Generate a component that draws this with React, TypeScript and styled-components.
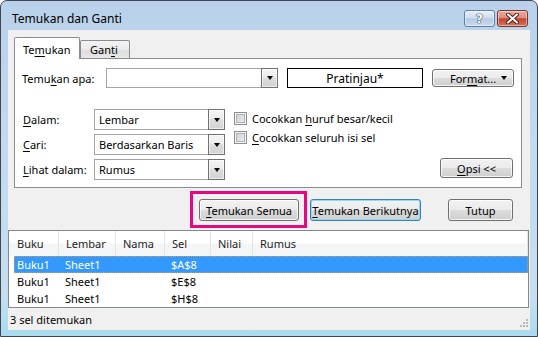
import React from "react";
import styled, { createGlobalStyle } from "styled-components";

const GlobalStyle = createGlobalStyle`
  html, body { margin: 0; padding: 0; background: #ffffff; }
  body {
    font-family: "Noto Sans", "Liberation Sans", Arial, sans-serif;
    font-size: 11px;
    color: #000000;
  }
  *, *::before, *::after { box-sizing: border-box; }
`;

const Window = styled.div`
  width: 538px;
  height: 337px;
  display: flex;
  flex-direction: column;
  border: 1px solid #3f4650;
  border-radius: 7px 7px 0 0;
  background: linear-gradient(180deg, #b9d1ea 0%, #c3d9ef 40%, #c6def0 88%, #a8dcee 100%);
  overflow: hidden;
`;

const TitleBar = styled.div`
  height: 29px;
  flex: none;
  display: flex;
  align-items: flex-start;
  padding: 9px 9px 0 11px;
`;

const Title = styled.div`
  flex: 1;
  font-size: 12px;
  line-height: 17px;
  color: #000000;
`;

const CaptionButtons = styled.div`
  display: flex;
  gap: 2px;
`;

const CaptionButton = styled.div<{ $close?: boolean }>`
  width: 31px;
  height: 17px;
  border: 1px solid ${(p) => (p.$close ? "#7e3326" : "#61809f")};
  border-radius: 3px;
  background: ${(p) =>
    p.$close
      ? "linear-gradient(180deg, #eaab9d 0%, #dc8f7e 45%, #c6442f 52%, #d2745c 100%)"
      : "linear-gradient(180deg, #e5eef8 0%, #d0deef 45%, #b5cae4 52%, #c8dbef 100%)"};
  box-shadow: inset 0 0 0 1px rgba(255, 255, 255, 0.45);
  display: flex;
  align-items: center;
  justify-content: center;
`;

const HelpGlyph = styled.span`
  font-family: "DejaVu Sans", sans-serif;
  font-weight: bold;
  font-size: 12px;
  line-height: 12px;
  color: #ffffff;
  text-shadow: 0 0 1px #2a3c52, 0 0 1px #2a3c52, 0 0 1px #2a3c52;
`;

const Client = styled.div`
  flex: 1;
  margin: 0 7px 6px 7px;
  background: #f0f0f0;
  display: flex;
  flex-direction: column;
`;

const TabArea = styled.div`
  padding: 7px 8px 0 6px;
`;

const TabStrip = styled.div`
  display: flex;
  align-items: flex-end;
  height: 21px;
  position: relative;
  z-index: 1;
`;

const Tab = styled.div<{ $active?: boolean; $w: number }>`
  width: ${(p) => p.$w}px;
  height: ${(p) => (p.$active ? 22 : 18)}px;
  margin-bottom: ${(p) => (p.$active ? -1 : 0)}px;
  border: 1px solid #898c95;
  border-bottom: none;
  border-radius: 2px 2px 0 0;
  background: ${(p) =>
    p.$active ? "#ffffff" : "linear-gradient(180deg, #f3f3f3 0%, #ebebeb 50%, #dedede 51%, #e6e6e6 100%)"};
  padding: ${(p) => (p.$active ? "2px 0 0 8px" : "0 0 0 9px")};
  display: flex;
  align-items: center;
  line-height: 14px;
`;

const Panel = styled.div`
  height: 130px;
  border: 1px solid #898c95;
  background: #ffffff;
  padding: 9px 8px 0 7px;
  display: flex;
  flex-direction: column;
`;

const FindRow = styled.div`
  display: flex;
  align-items: center;
  height: 20px;
`;

const FieldLabel = styled.span<{ $w: number }>`
  width: ${(p) => p.$w}px;
  flex: none;
  white-space: nowrap;
`;

const Key = styled.u`
  text-decoration: underline;
  text-underline-offset: 2px;
`;

const Combo = styled.div<{ $w: number; $h: number }>`
  width: ${(p) => p.$w}px;
  height: ${(p) => p.$h}px;
  flex: none;
  border: 1px solid #a5a5a5;
  background: #ffffff;
  display: flex;
  align-items: stretch;
`;

const ComboText = styled.div`
  flex: 1;
  padding-left: 4px;
  display: flex;
  align-items: center;
  white-space: nowrap;
`;

const DropButton = styled.div`
  width: 17px;
  margin: -1px -1px -1px 0;
  border: 1px solid #707070;
  background: linear-gradient(180deg, #f4f4f4 0%, #ebebeb 45%, #dddddd 50%, #d2d2d2 100%);
  box-shadow: inset 0 0 0 1px rgba(255, 255, 255, 0.6);
  display: flex;
  align-items: center;
  justify-content: center;
`;

const Arrow = styled.span`
  width: 0;
  height: 0;
  border-left: 3.5px solid transparent;
  border-right: 3.5px solid transparent;
  border-top: 4px solid #000000;
`;

const Preview = styled.div`
  width: 136px;
  height: 20px;
  margin-left: 9px;
  flex: none;
  border: 1px solid #000000;
  background: #ffffff;
  display: flex;
  align-items: center;
  justify-content: center;
  font-size: 12px;
`;

const PushButton = styled.div<{ $w: number; $h: number; $default?: boolean }>`
  width: ${(p) => p.$w}px;
  height: ${(p) => p.$h}px;
  flex: none;
  border: 1px solid ${(p) => (p.$default ? "#3c7fb1" : "#707070")};
  border-radius: 3px;
  background: linear-gradient(180deg, #f2f2f2 0%, #ebebeb 48%, #dddddd 50%, #cfcfcf 100%);
  box-shadow: inset 0 0 0 1px ${(p) => (p.$default ? "#8edbf9" : "rgba(255, 255, 255, 0.75)")};
  display: flex;
  align-items: center;
  justify-content: center;
  white-space: nowrap;
`;

const FormatButton = styled(PushButton)`
  margin-left: 9px;
  justify-content: space-between;
  padding: 0 6px 0 17px;
`;

const LowerSection = styled.div`
  display: flex;
  margin-top: 21px;
`;

const OptionGrid = styled.div`
  display: grid;
  grid-template-columns: 71px 131px;
  row-gap: 4px;
  align-items: center;
  padding-left: 1px;
`;

const CheckColumn = styled.div`
  display: flex;
  flex-direction: column;
  gap: 6px;
  margin-left: 9px;
  padding-top: 3px;
`;

const CheckRow = styled.div`
  display: flex;
  align-items: center;
  gap: 5px;
  height: 13px;
`;

const CheckBox = styled.span`
  width: 13px;
  height: 13px;
  flex: none;
  border: 1px solid #8e8f8f;
  background: linear-gradient(135deg, #cbcfd5 0%, #f0f0f0 100%);
  box-shadow: inset 0 0 0 1px #f4f4f4, inset 0 0 0 2px #aeb3b9;
`;

const OptionsButton = styled(PushButton)`
  margin-left: auto;
  align-self: flex-end;
  margin-bottom: 2px;
`;

const ButtonRow = styled.div`
  display: flex;
  align-items: center;
  height: 22px;
  margin-top: 11px;
  padding: 0 17px 0 191px;
  gap: 11px;
`;

const Highlight = styled.div`
  margin: -8px -8px -7px -9px;
  border: 3px solid #e5097f;
  padding: 5px 5px 4px 6px;
  display: flex;
`;

const CloseButton = styled(PushButton)`
  margin-left: auto;
`;

const ResultList = styled.div`
  height: 78px;
  margin: 9px 1px 0 0;
  border: 1px solid #828790;
  background: #ffffff;
  display: flex;
  flex-direction: column;
`;

const HeaderRow = styled.div`
  display: flex;
  height: 25px;
  background: linear-gradient(180deg, #ffffff 0%, #ffffff 45%, #f4f5f7 55%, #f4f5f7 100%);
`;

const HeaderCell = styled.div<{ $w: number; $pad: number }>`
  width: ${(p) => p.$w}px;
  flex: none;
  padding-left: ${(p) => p.$pad}px;
  border-right: 1px solid #e3e4e6;
  display: flex;
  align-items: center;
  color: #1e1e1e;
`;

const DataRow = styled.div<{ $selected?: boolean }>`
  display: flex;
  height: 17px;
  margin-left: 5px;
  background: ${(p) => (p.$selected ? "#3399ff" : "transparent")};
  color: ${(p) => (p.$selected ? "#ffffff" : "#000000")};
  outline: ${(p) => (p.$selected ? "1px dotted #d39a52" : "none")};
  outline-offset: -1px;
`;

const DataCell = styled.div<{ $w: number; $pad: number }>`
  width: ${(p) => p.$w}px;
  flex: none;
  padding-left: ${(p) => p.$pad}px;
  display: flex;
  align-items: center;
  white-space: nowrap;
`;

const StatusBar = styled.div`
  flex: 1;
  display: flex;
  align-items: center;
  justify-content: space-between;
  padding: 0 2px 0 2px;
`;

const Grip = styled.svg`
  align-self: flex-end;
  margin-bottom: 2px;
`;

const columns = [
  { title: "Buku", w: 50 },
  { title: "Lembar", w: 57 },
  { title: "Nama", w: 49 },
  { title: "Sel", w: 46 },
  { title: "Nilai", w: 42 },
  { title: "Rumus", w: 275 },
];

const results = [
  { book: "Buku1", sheet: "Sheet1", cell: "$A$8", selected: true },
  { book: "Buku1", sheet: "Sheet1", cell: "$E$8" },
  { book: "Buku1", sheet: "Sheet1", cell: "$H$8" },
];

const ComboBox = ({ w, h, text }: { w: number; h: number; text?: string }) => (
  <Combo $w={w} $h={h}>
    <ComboText>{text}</ComboText>
    <DropButton>
      <Arrow />
    </DropButton>
  </Combo>
);

export default function App() {
  return (
    <>
      <GlobalStyle />
      <Window>
        <TitleBar>
          <Title>Temukan dan Ganti</Title>
          <CaptionButtons>
            <CaptionButton>
              <HelpGlyph>?</HelpGlyph>
            </CaptionButton>
            <CaptionButton $close>
              <svg width="13" height="11" viewBox="0 0 13 11">
                <path d="M2 1.5 L11 9.5 M11 1.5 L2 9.5" stroke="#5a2118" strokeWidth="4" strokeLinecap="round" />
                <path d="M2 1.5 L11 9.5 M11 1.5 L2 9.5" stroke="#ffffff" strokeWidth="2" strokeLinecap="round" />
              </svg>
            </CaptionButton>
          </CaptionButtons>
        </TitleBar>

        <Client>
          <TabArea>
            <TabStrip>
              <Tab $active $w={66}>
                Te<Key>m</Key>ukan
              </Tab>
              <Tab $w={50}>
                Gan<Key>t</Key>i
              </Tab>
            </TabStrip>
            <Panel>
              <FindRow>
                <FieldLabel $w={84}>
                  Temu<Key>k</Key>an apa:
                </FieldLabel>
                <ComboBox w={172} h={20} />
                <Preview>Pratinjau*</Preview>
                <FormatButton $w={82} $h={18}>
                  <span>
                    For<Key>m</Key>at...
                  </span>
                  <Arrow />
                </FormatButton>
              </FindRow>

              <LowerSection>
                <OptionGrid>
                  <FieldLabel $w={71}>
                    <Key>D</Key>alam:
                  </FieldLabel>
                  <ComboBox w={131} h={21} text="Lembar" />
                  <FieldLabel $w={71}>
                    <Key>C</Key>ari:
                  </FieldLabel>
                  <ComboBox w={131} h={21} text="Berdasarkan Baris" />
                  <FieldLabel $w={71}>
                    <Key>L</Key>ihat dalam:
                  </FieldLabel>
                  <ComboBox w={131} h={21} text="Rumus" />
                </OptionGrid>
                <CheckColumn>
                  <CheckRow>
                    <CheckBox />
                    <span>
                      Cocokkan <Key>h</Key>uruf besar/kecil
                    </span>
                  </CheckRow>
                  <CheckRow>
                    <CheckBox />
                    <span>
                      <Key>C</Key>ocokkan seluruh isi sel
                    </span>
                  </CheckRow>
                </CheckColumn>
                <OptionsButton $w={73} $h={20}>
                  <span>
                    <Key>O</Key>psi &lt;&lt;
                  </span>
                </OptionsButton>
              </LowerSection>
            </Panel>
          </TabArea>

          <ButtonRow>
            <Highlight>
              <PushButton $w={100} $h={22}>
                <span>
                  <Key>T</Key>emukan Semua
                </span>
              </PushButton>
            </Highlight>
            <PushButton $w={111} $h={22} $default>
              <span>
                <Key>T</Key>emukan Berikutnya
              </span>
            </PushButton>
            <CloseButton $w={65} $h={22}>
              Tutup
            </CloseButton>
          </ButtonRow>

          <ResultList>
            <HeaderRow>
              {columns.map((c, i) => (
                <HeaderCell key={c.title} $w={c.w} $pad={i === 0 ? 8 : 7}>
                  {c.title}
                </HeaderCell>
              ))}
            </HeaderRow>
            {results.map((r) => (
              <DataRow key={r.cell} $selected={r.selected}>
                <DataCell $w={45} $pad={3}>{r.book}</DataCell>
                <DataCell $w={57} $pad={6}>{r.sheet}</DataCell>
                <DataCell $w={49} $pad={6} />
                <DataCell $w={46} $pad={6}>{r.cell}</DataCell>
              </DataRow>
            ))}
          </ResultList>

          <StatusBar>
            <span>3 sel ditemukan</span>
            <Grip width="10" height="10" viewBox="0 0 10 10">
              {[
                [8, 0],
                [8, 3],
                [5, 3],
                [8, 6],
                [5, 6],
                [2, 6],
              ].map(([x, y]) => (
                <rect key={`${x}-${y}`} x={x} y={y + 1} width="2" height="2" fill="#b8b8b8" />
              ))}
            </Grip>
          </StatusBar>
        </Client>
      </Window>
    </>
  );
}
